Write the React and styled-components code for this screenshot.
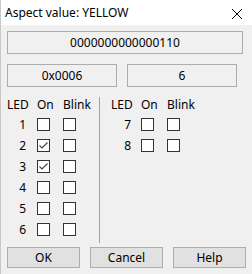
import React, { useState } from 'react';
import styled, { createGlobalStyle } from 'styled-components';

const GlobalStyle = createGlobalStyle`
  html, body {
    margin: 0;
    padding: 0;
    background: #f0f0f0;
  }
  body {
    font-family: "Noto Sans", "Liberation Sans", Arial, sans-serif;
    font-size: 12px;
    line-height: 16px;
    color: #000;
  }
`;

const Window = styled.div`
  width: 252px;
  height: 274px;
  box-sizing: border-box;
  background: #f0f0f0;
  border-left: 1px solid #c8c8c8;
  display: flex;
  flex-direction: column;
  overflow: hidden;
`;

const TitleBar = styled.div`
  height: 25px;
  background: #fff;
  display: flex;
  align-items: center;
  justify-content: space-between;
  padding: 0 9px 0 4px;
`;

const CloseIcon = styled.svg`
  width: 12px;
  height: 12px;
  margin-top: 2px;
`;

const Body = styled.div`
  padding: 6px 0 0 6px;
  display: flex;
  flex-direction: column;
`;

const Field = styled.div`
  box-sizing: border-box;
  height: 23px;
  width: ${({ $w }) => $w}px;
  border: 1px solid #adadad;
  background: #f0f0f0;
  display: flex;
  align-items: center;
  justify-content: center;
  letter-spacing: ${({ $spacing }) => $spacing || 0}px;
`;

const FieldRow = styled.div`
  display: flex;
  gap: 10px;
  margin-top: 10px;
`;

const Columns = styled.div`
  display: flex;
  margin-top: 10px;
`;

const Group = styled.div`
  width: ${({ $w }) => $w}px;
  padding-left: ${({ $pad }) => $pad}px;
  display: grid;
  grid-template-columns: 30px 26px auto;
  grid-auto-rows: 21px;
  grid-template-rows: 17px;
  align-content: start;
  align-items: center;
`;

const Separator = styled.div`
  width: 1px;
  height: 146px;
  background: #a0a0a0;
`;

const Head = styled.div`
  line-height: 16px;
  margin-bottom: 6px;
  grid-row: 1;
  align-self: start;
`;

const Num = styled.div`
  text-align: right;
  padding-right: ${({ $pr }) => $pr}px;
`;

const Box = styled.div`
  box-sizing: border-box;
  width: 13px;
  height: 13px;
  border: 1px solid #333;
  background: #fff;
  display: flex;
`;

const Buttons = styled.div`
  display: flex;
  gap: 10px;
  margin-top: 4px;
`;

const Button = styled.button`
  box-sizing: border-box;
  width: 73px;
  height: 21px;
  border: 1px solid #adadad;
  background: #e1e1e1;
  font-family: inherit;
  font-size: 12px;
  color: #000;
  padding: 0;
`;

const Check = ({ checked, onToggle }) => (
  <Box onClick={onToggle}>
    {checked && (
      <svg width="11" height="11" viewBox="0 0 11 11">
        <path d="M1.5 5.5 L4 8 L9.5 2.5" fill="none" stroke="#444" strokeWidth="1.2" />
      </svg>
    )}
  </Box>
);

const App = () => {
  const [on, setOn] = useState([false, true, true, false, false, false, false, false]);
  const [blink, setBlink] = useState(Array(8).fill(false));

  const toggle = (arr, set, i) => set(arr.map((v, j) => (j === i ? !v : v)));

  const rows = (start, end, pr) =>
    on.slice(start, end).map((_, k) => {
      const i = start + k;
      return (
        <React.Fragment key={i}>
          <Num $pr={pr}>{i + 1}</Num>
          <Check checked={on[i]} onToggle={() => toggle(on, setOn, i)} />
          <Check checked={blink[i]} onToggle={() => toggle(blink, setBlink, i)} />
        </React.Fragment>
      );
    });

  return (
    <Window>
      <GlobalStyle />
      <TitleBar>
        <span>Aspect value: YELLOW</span>
        <CloseIcon viewBox="0 0 12 12">
          <path d="M1 1 L11 11 M11 1 L1 11" stroke="#000" strokeWidth="1" />
        </CloseIcon>
      </TitleBar>
      <Body>
        <Field $w={236}>0000000000000110</Field>
        <FieldRow>
          <Field $w={110}>0x0006</Field>
          <Field $w={110}>6</Field>
        </FieldRow>
        <Columns>
          <Group $w={92} $pad={0}>
            <Head>LED</Head>
            <Head>On</Head>
            <Head>Blink</Head>
            {rows(0, 6, 11)}
          </Group>
          <Separator />
          <Group $w={130} $pad={11}>
            <Head>LED</Head>
            <Head>On</Head>
            <Head>Blink</Head>
            {rows(6, 8, 10)}
          </Group>
        </Columns>
        <Buttons>
          <Button>OK</Button>
          <Button>Cancel</Button>
          <Button>Help</Button>
        </Buttons>
      </Body>
    </Window>
  );
};

export default App;
